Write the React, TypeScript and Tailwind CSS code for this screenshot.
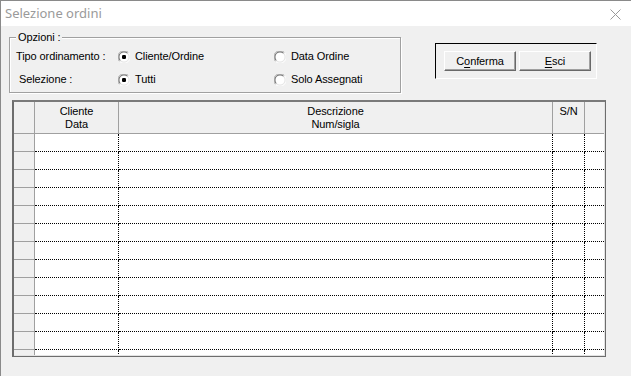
import React from "react";

function Radio({ checked }: { checked?: boolean }) {
  return (
    <svg width="12" height="12" viewBox="0 0 12 12" className="shrink-0">
      <circle cx="6" cy="6" r="5.5" fill="#ffffff" />
      <path d="M1.6 10.4 A6 6 0 0 1 10.4 1.6" stroke="#a0a0a0" strokeWidth="1" fill="none" />
      <path d="M2.4 9.6 A4.8 4.8 0 0 1 9.6 2.4" stroke="#696969" strokeWidth="1" fill="none" />
      <path d="M10.4 1.6 A6 6 0 0 1 1.6 10.4" stroke="#ffffff" strokeWidth="1" fill="none" />
      <path d="M9.6 2.4 A4.8 4.8 0 0 1 2.4 9.6" stroke="#e3e3e3" strokeWidth="1" fill="none" />
      {checked && <rect x="4" y="4" width="4" height="4" rx="1.2" fill="#000000" />}
    </svg>
  );
}

function Btn({ pre, ul, post }: { pre: string; ul: string; post: string }) {
  return (
    <div className="w-[72px] h-[20px] bg-[#f0f0f0] border-t border-l border-white border-r border-b border-r-[#696969] border-b-[#696969] shadow-[inset_-1px_-1px_0_#a0a0a0] flex items-center justify-center text-[11px] text-black">
      <span>
        {pre}
        <span className="underline underline-offset-[2px]">{ul}</span>
        {post}
      </span>
    </div>
  );
}

const ROWS = Array.from({ length: 13 });

export default function App() {
  return (
    <div className="w-[631px] h-[376px] bg-[#f0f0f0] border-l border-t border-[#8a8a8a] overflow-hidden font-['Liberation_Sans',Arial,sans-serif] text-[11px] tracking-[-0.1px] text-black flex flex-col">
      {/* Title bar */}
      <div className="h-[25px] bg-white flex items-center justify-between shrink-0">
        <span className="pl-[4px] pt-[1px] text-[13px] tracking-normal text-[#9a9a9a] font-['Noto_Sans',sans-serif]">Selezione ordini</span>
        <svg width="11" height="11" viewBox="0 0 11 11" className="mr-[10px] mt-[1px]">
          <path d="M0.5 0.5 L10.5 10.5 M10.5 0.5 L0.5 10.5" stroke="#9a9a9a" strokeWidth="1" />
        </svg>
      </div>

      {/* Top area */}
      <div className="flex items-start shrink-0">
        {/* Group box */}
        <div className="relative ml-[8px] mt-[11px] w-[392px] h-[56px] border border-[#a0a0a0] shadow-[1px_1px_0_#ffffff,inset_1px_1px_0_#ffffff]">
          <span className="absolute left-[6px] top-[-8px] bg-[#f0f0f0] pl-[2px] pr-[1px] leading-[14px]">Opzioni :</span>
          <div className="grid grid-cols-[108px_156px_auto] pt-[7px]">
            <div className="h-[23px] flex items-center pl-[6px]">Tipo ordinamento :</div>
            <div className="h-[23px] flex items-center gap-[5px]">
              <Radio checked />
              <span>Cliente/Ordine</span>
            </div>
            <div className="h-[23px] flex items-center gap-[5px]">
              <Radio />
              <span>Data Ordine</span>
            </div>
            <div className="h-[23px] flex items-center pl-[9px]">Selezione :</div>
            <div className="h-[23px] flex items-center gap-[5px]">
              <Radio checked />
              <span>Tutti</span>
            </div>
            <div className="h-[23px] flex items-center gap-[5px]">
              <Radio />
              <span>Solo Assegnati</span>
            </div>
          </div>
        </div>

        {/* Button frame */}
        <div className="ml-[34px] mt-[17px] w-[162px] h-[36px] border-t border-l border-black border-r border-b border-r-white border-b-white flex gap-[3px] pl-[8px] pt-[7px]">
          <Btn pre="C" ul="o" post="nferma" />
          <Btn pre="" ul="E" post="sci" />
        </div>
      </div>

      {/* Grid */}
      <div className="ml-[11px] mt-[7px] w-[594px] h-[257px] border-t-2 border-l-2 border-t-[#7a7a7a] border-l-[#6d6d6d] border-r border-b border-r-[#6d6d6d] border-b-[#6d6d6d] shadow-[inset_-1px_-1px_0_#e3e3e3] overflow-hidden shrink-0">
        <div className="w-[590px] h-[253px] overflow-hidden flex flex-col">
          {/* Header */}
          <div className="h-[32px] shrink-0 flex bg-[#f0f0f0] border-b border-[#a0a0a0]">
            <div className="w-[21px] border-r border-[#a0a0a0]" />
            <div className="w-[84px] border-r border-[#a0a0a0] flex flex-col items-center pt-[3px] leading-[13px]">
              <span>Cliente</span>
              <span>Data</span>
            </div>
            <div className="w-[434px] border-r border-[#a0a0a0] flex flex-col items-center pt-[3px] leading-[13px]">
              <span>Descrizione</span>
              <span>Num/sigla</span>
            </div>
            <div className="w-[32px] border-r border-[#a0a0a0] flex flex-col items-center pt-[3px] leading-[13px]">
              <span>S/N</span>
            </div>
            <div className="w-[19px]" />
          </div>
          {/* Rows */}
          {ROWS.map((_, i) => (
            <div key={i} className="h-[18px] shrink-0 flex">
              <div className="w-[21px] bg-[#f0f0f0] border-r border-b border-[#a0a0a0]" />
              <div className="w-[84px] bg-white border-r border-b border-dotted border-black" />
              <div className="w-[434px] bg-white border-r border-b border-dotted border-black" />
              <div className="w-[32px] bg-white border-r border-b border-dotted border-black" />
              <div className="w-[19px] bg-white border-b border-dotted border-black" />
            </div>
          ))}
        </div>
      </div>
    </div>
  );
}
